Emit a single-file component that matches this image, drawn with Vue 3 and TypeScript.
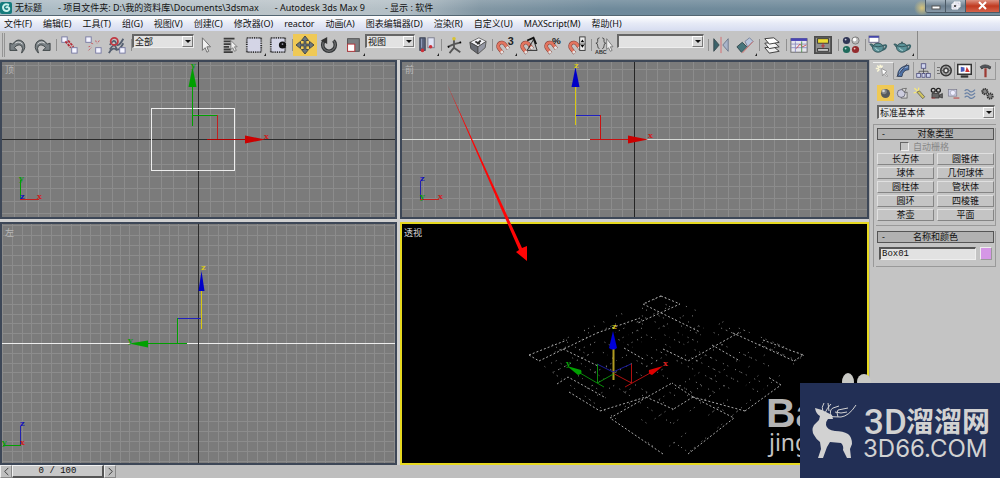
<script setup lang="ts">
import { ref } from 'vue'

interface Tool { kind: 'tool' | 'sep' | 'wide' | 'combo'; id: string; label?: string; width?: string; options?: string[]; active?: boolean; fly?: boolean }

const menus = ['文件(F)', '编辑(E)', '工具(T)', '组(G)', '视图(V)', '创建(C)', '修改器(O)', 'reactor', '动画(A)', '图表编辑器(D)', '渲染(R)', '自定义(U)', 'MAXScript(M)', '帮助(H)']

const t = (id: string, label: string, extra: Partial<Tool> = {}): Tool => ({ kind: 'tool', id, label, ...extra })
const s = (id: string, kind: 'sep' | 'wide' = 'sep'): Tool => ({ kind, id })

const tools: Tool[] = [
  t('undo', '撤销'), t('redo', '重做'), s('s1'),
  t('link', '选择并链接'), t('unlink', '断开链接'), t('bind', '绑定到空间扭曲'), s('s2'),
  { kind: 'combo', id: 'filter', label: '选择过滤器', width: 'w-filter', options: ['全部'] },
  t('pointer', '选择对象'), t('list', '按名称选择'), t('region', '矩形选择区域', { fly: true }), t('crossing', '窗口/交叉'), s('s3'),
  t('move', '选择并移动', { active: true }), t('rotate', '选择并旋转'), t('scale', '选择并缩放', { fly: true }),
  { kind: 'combo', id: 'coord', label: '参考坐标系', width: 'w-coord', options: ['视图'] },
  t('pivot', '使用轴点中心', { fly: true }), s('s4'),
  t('manip', '选择并操纵'), t('keys', '键盘快捷键覆盖切换'), s('s5'),
  t('snap', '捕捉开关', { fly: true }), t('angle', '角度捕捉'), t('percent', '百分比捕捉'), t('spin', '微调器捕捉'), s('s6'),
  t('sets', '编辑命名选择集'),
  { kind: 'combo', id: 'named', label: '命名选择集', width: 'w-named', options: [''] }, s('s7', 'wide'),
  t('mirror', '镜像'), t('align', '对齐', { fly: true }), s('s8'),
  t('layers', '层管理器'), s('s9'),
  t('curve', '曲线编辑器'), t('schem', '图解视图'), s('s10', 'wide'),
  t('mat', '材质编辑器'), s('s11'),
  t('render', '渲染场景'), t('quick', '快速渲染', { fly: true }),
]

const magnet = '<g transform="rotate(-38 7 12)" fill="none"><path d="M3 18v-7a4 4 0 0 1 8 0v7" stroke="#7c3a33" stroke-width="4"/><path d="M3 17v-6a4 4 0 0 1 8 0v6" stroke="#e27560" stroke-width="3"/><path d="M3 18v-3M11 18v-3" stroke="#e4e4e4" stroke-width="3"/></g>'
const teapot = '<path d="M5 14 1 9h2l4 3" fill="#46797f" stroke="#2f5358"/><path d="M15 11q5-2 4 1t-5 4" fill="none" stroke="#3a666c" stroke-width="2"/><ellipse cx="10" cy="13" rx="6" ry="5" fill="#5b9298" stroke="#305055"/><path d="M5 11q5 2 10 0" fill="none" stroke="#2f5358"/><circle cx="10" cy="7" r="1" fill="#2f5358"/><path d="M7 13q1 3 4 3" stroke="#bfe0e2" fill="none"/>'

const icons: Record<string, string> = {
  undo: '<path d="M1 8v8h8l-3-3q4-5 8-2 2 2 0 8 6-6 2-12-6-6-12 2z" fill="#7a8185" stroke="#373d40"/><path d="M7 8q4-3 8 1" stroke="#e4e4e4" fill="none"/>',
  redo: '<path d="M19 8v8h-8l3-3q-4-5-8-2-2 2 0 8Q0 13 4 7q6-6 12 2z" fill="#7a8185" stroke="#373d40"/><path d="M13 8Q9 5 5 9" stroke="#e4e4e4" fill="none"/>',
  link: '<rect x="2" y="1" width="6" height="6" fill="#f4f4ff" stroke="#7376a0"/><rect x="13" y="13" width="6" height="6" fill="#f4f4ff" stroke="#7376a0"/><path d="m6 6 6 7M9 5l6 7" stroke="#b52b36" stroke-width="2" stroke-dasharray="3 1"/>',
  unlink: '<rect x="2" y="1" width="6" height="6" fill="#f4f4ff" stroke="#7376a0"/><rect x="13" y="13" width="6" height="6" fill="#f4f4ff" stroke="#7376a0"/><path d="m8 8 3 1m2-4 1 3m3-3-2 3m-10 4 3-1m-3 5 3-3" stroke="#c64f57" stroke-dasharray="2 1"/>',
  bind: '<path d="M2 10q5-8 7-2t8-5M2 15q5-8 7-2t8-5M1 19q4-8 9-3" fill="none" stroke="#555f70" stroke-width="2"/><circle cx="7" cy="6" r="4" fill="none" stroke="#c13a44" stroke-width="2"/><rect x="13" y="13" width="6" height="6" fill="#f4f4ff" stroke="#7376a0"/>',
  pointer: '<path d="M6 2v14l3-3 2 5 2-1-2-5h4z" fill="#f0f0f0" stroke="#666"/>',
  list: '<path d="M3 3h12M3 6h8M3 9h10M3 12h6M3 15h8M3 18h10" stroke="#3b3b3b" stroke-width="2"/><path d="M11 5v10l2-2 2 4 2-1-2-4h3z" fill="#eee" stroke="#777"/>',
  region: '<rect x="2" y="2" width="16" height="16" fill="#d4d5e6" stroke="#222" stroke-width="2" stroke-dasharray="1 1"/>',
  crossing: '<rect x="2" y="2" width="16" height="16" fill="#d4d5e6" stroke="#222" stroke-width="2" stroke-dasharray="1 1"/><circle cx="15" cy="10" r="4" fill="#111"/><circle cx="15" cy="9" r="1" fill="#99a"/>',
  move: '<path d="m10 0 4 5h-3v4h4V6l5 4-5 4v-3h-4v4h3l-4 5-4-5h3v-4H5v3l-5-4 5-4v3h4V5H6z" fill="#6b767c" stroke="#3c4246"/>',
  rotate: '<path d="M5 5a7 7 0 1 0 10 0" fill="none" stroke="#343739" stroke-width="4"/><path d="M5 5a7 7 0 1 0 10 0" fill="none" stroke="#888" stroke-width="1"/><path d="M1 5 8 1v8z" fill="#333"/>',
  scale: '<rect x="4" y="3" width="13" height="14" fill="#7b7f82" stroke="#4b4b4b"/><rect x="4" y="9" width="8" height="8" fill="#fff" stroke="#b62f34"/>',
  pivot: '<rect x="2" y="2" width="6" height="14" fill="#59627a" stroke="#333a4d"/><rect x="11" y="2" width="7" height="11" fill="#dfe3f4" stroke="#778"/><circle cx="5" cy="16" r="2" fill="#cb3039"/><circle cx="14" cy="12" r="2" fill="#cb3039"/><path d="M4 3v10" stroke="#9ba7c6"/>',
  manip: '<path d="M10 4v9l-5 6m5-6 7 5M3 12l7-3 8-2" fill="none" stroke="#555" stroke-width="2"/><circle cx="10" cy="3" r="2" fill="#d7c331"/><circle cx="4" cy="12" r="1"/><circle cx="17" cy="7" r="1"/>',
  keys: '<path d="m1 7 10-5 8 4-9 6z" fill="#f1f1f5" stroke="#666"/><path d="m1 7 9 5v8l-8-6z" fill="#6a6d75" stroke="#444"/><path d="m19 6-9 6v8l8-7z" fill="#9699a5" stroke="#555"/><path d="m7 6 5 3m-3 0 4-4" stroke="#333" stroke-width="2"/>',
  snap: magnet + '<text x="13" y="10" font-family="Liberation Sans" font-size="12" font-weight="700" fill="#222">3</text>',
  angle: magnet + '<path d="M8 16 15 4l4 12z" fill="none" stroke="#222"/><path d="m8 5 7-3 3 7" stroke="#111" stroke-width="2" fill="none"/>',
  percent: magnet + '<text x="9" y="9" font-family="Liberation Sans" font-size="11" font-weight="700" fill="#222">%</text>',
  spin: magnet + '<rect x="13" y="1" width="6" height="15" fill="#eee" stroke="#333"/><path d="m14 7 2-3 2 3zm0 3 2 3 2-3z"/><path d="M13 9h6" stroke="#333"/>',
  sets: '<path d="M5 2Q2 2 3 6q0 2-2 2 2 0 2 3 0 3 2 3M8 2q3 0 2 4 0 2 2 2-2 0-2 3 0 3-2 3" fill="none" stroke="#444"/><path d="M13 3v12l2-2 2 4 2-1-2-4h3z" fill="#eee" stroke="#777"/><text x="0" y="20" font-family="Liberation Sans" font-size="6" font-weight="700" fill="#333">ABC</text>',
  mirror: '<path d="M2 3v14l6-7z" fill="#39626a" stroke="#3a4a4e"/><path d="M18 3v14l-6-7z" fill="#a9b4c9" stroke="#69758a"/><path d="M10 1v18" stroke="#d66a6e" stroke-width="1"/>',
  align: '<path d="m1 12 6-5 5 5-6 6z" fill="#47757c" stroke="#32474c"/><path d="m10 6 5-4 4 4-6 6z" fill="#b9c6dd" stroke="#75809a"/><path d="m7 19 12-13" stroke="#cd6a66"/>',
  layers: '<path d="m2 13 10-1 6 5-11 2z" fill="#eee" stroke="#333"/><path d="m2 8 10-1 6 5-11 2z" fill="#f5f5f5" stroke="#333"/><path d="m2 3 10-1 6 5-11 2z" fill="#fff" stroke="#333"/>',
  curve: '<rect x="1" y="3" width="18" height="15" fill="#e6e6ee" stroke="#666"/><path d="M1 4h18" stroke="#4944b4" stroke-width="3"/><path d="M6 6v12M1 9h18M1 13h18" stroke="#8c8cc0"/><path d="m7 14 4-5 3 3 4-2" stroke="#ca4a50" fill="none"/><path d="M13 6v12" stroke="#4d9148"/>',
  schem: '<rect x="1" y="1" width="18" height="18" fill="#8f8f8f" stroke="#4c4c4c" stroke-width="2"/><rect x="4" y="3" width="12" height="5" fill="#eedb34" stroke="#333"/><path d="M10 8v6m-2-3h4" stroke="#c02b2f"/><rect x="4" y="14" width="12" height="3" fill="#ccc" stroke="#333"/>',
  mat: '<circle cx="5" cy="5" r="4" fill="#303656"/><circle cx="15" cy="5" r="4" fill="#b7b7b7" stroke="#777"/><circle cx="5" cy="15" r="4" fill="#1f6a5b"/><circle cx="15" cy="15" r="4" fill="#942b2d"/><circle cx="4" cy="4" r="1" fill="#ccd"/><circle cx="14" cy="4" r="2" fill="#fff"/><circle cx="4" cy="14" r="1" fill="#bdd"/><circle cx="14" cy="14" r="1" fill="#ecc"/>',
  render: teapot + '<rect x="0" y="0" width="11" height="7" fill="#fff" stroke="#668"/><path d="M0 1h11" stroke="#4547a9" stroke-width="2"/>',
  quick: teapot,
  create: '<path d="m9 6 1 10 2-3 4 4 1-1-4-4 3-2z" fill="#fff" stroke="#888"/><path d="M7 1v4M1 6h4m-2-4 3 3m4-3L8 5M3 10l3-3" stroke="#fbf7d8" stroke-width="2"/>',
  modify: '<path d="M2 18Q2 4 17 3v6Q9 9 8 18z" fill="#4d70a4" stroke="#26364e"/><path d="M4 16Q5 6 16 5" stroke="#b5cdeb" fill="none"/><path d="M1 18 15 1" stroke="#334" />',
  hier: '<path d="M10 7v3M4 14v-3h12v3M10 10v4" stroke="#444" fill="none"/><rect x="7" y="1" width="6" height="6" fill="#cfd4ee" stroke="#447"/><rect x="1" y="14" width="5" height="5" fill="#cfd4ee" stroke="#447"/><rect x="8" y="14" width="4" height="5" fill="#cfd4ee" stroke="#447"/><rect x="14" y="14" width="5" height="5" fill="#cfd4ee" stroke="#447"/>',
  motion: '<circle cx="12" cy="10" r="7" fill="#aaa" stroke="#333" stroke-width="2"/><circle cx="12" cy="10" r="3" fill="#eee" stroke="#444" stroke-width="2"/><path d="m12 3v4m0 6v4M5 10h4m6 0h4" stroke="#555"/><path d="M0 6h4M0 10h3M0 14h4" stroke="#555"/>',
  display: '<rect x="1" y="2" width="18" height="13" fill="#fff" stroke="#333" stroke-width="2"/><path d="M5 5v7l5-1V6z" fill="#4b5bbb"/><path d="m11 12 2-7 4 7z" fill="#c33"/><path d="M5 18h10" stroke="#333" stroke-width="3"/>',
  util: '<path d="M3 5q6-5 14 0l-1 3-4-2H8L5 8z" fill="#50555c" stroke="#333"/><path d="M10 7v12" stroke="#9c3b34" stroke-width="3"/>',
  geo: '<circle cx="10" cy="10" r="7" fill="#56595d"/><circle cx="8" cy="7" r="4" fill="#85888b"/><circle cx="7" cy="6" r="2" fill="#d5d5d5"/>',
  shape: '<rect x="8" y="8" width="9" height="9" fill="#ddd" stroke="#444"/><circle cx="8" cy="10" r="6" fill="#ccd" stroke="#445"/><path d="m9 3 7-1-3 6z" fill="#ddd" stroke="#444"/>',
  light: '<path d="m2 2 6 5m-7 2 5-1M9 1 8 6" stroke="#f6e87c" stroke-width="2"/><path d="m6 8 4-2 8 9-3 3z" fill="#d1c561" stroke="#444"/>',
  camera: '<circle cx="5" cy="5" r="3" fill="#ccc" stroke="#222" stroke-width="2"/><circle cx="13" cy="5" r="3" fill="#ccc" stroke="#222" stroke-width="2"/><path d="M3 10h11v7H3zm11 3 5-3v7l-5-2" fill="#666" stroke="#222"/><path d="M2 17h6" stroke="#b33"/>',
  helper: '<rect x="2" y="4" width="13" height="10" fill="#c9cce4" stroke="#778"/><circle cx="9" cy="9" r="4" fill="#eef" stroke="#99a"/><path d="M10 17h9" stroke="#bd5e5e" stroke-width="2"/>',
  warp: '<path d="M1 6q4-4 7 0t9-2M1 11q4-4 7 0t9-2M1 16q4-4 7 0t9-2" fill="none" stroke="#6981a5" stroke-width="2"/>',
  system: '<circle cx="6" cy="7" r="4" fill="#888" stroke="#333" stroke-width="3" stroke-dasharray="2 1"/><circle cx="14" cy="14" r="4" fill="#888" stroke="#333" stroke-width="3" stroke-dasharray="2 1"/>',
}

const tabs = [['create', '创建'], ['modify', '修改'], ['hier', '层次'], ['motion', '运动'], ['display', '显示'], ['util', '工具']]
const cats = [['geo', '几何体'], ['shape', '图形'], ['light', '灯光'], ['camera', '摄影机'], ['helper', '辅助对象'], ['warp', '空间扭曲'], ['system', '系统']]
const objectTypes = ['长方体', '圆锥体', '球体', '几何球体', '圆柱体', '管状体', '圆环', '四棱锥', '茶壶', '平面']

const objectName = ref('Box01')
const autoGrid = ref(false)

/* Grid lines run outward from the origin line so they stay evenly spaced. */
function gridPath(ox: number, oy: number, step: number, x0: number, y0: number, x1: number, y1: number): string {
  let d = ''
  for (let i = Math.ceil((x0 - ox) / step); ox + i * step < x1; i++) {
    d += `M${Math.round(ox + i * step) + 0.5} ${y0}V${y1}`
  }
  for (let i = Math.ceil((y0 - oy) / step); oy + i * step < y1; i++) {
    d += `M${x0} ${Math.round(oy + i * step) + 0.5}H${x1}`
  }
  return d
}
const topGrid = gridPath(198, 139, 12.3, 2, 62, 395, 217)
const frontGrid = gridPath(634, 139, 11.7, 402, 62, 867, 217)
const leftGrid = gridPath(198, 343, 9.8, 2, 224, 395, 463)

/* Ground plane of the perspective view: a quad projected from the unit square. */
type P = [number, number]
function project(u: number, v: number): P {
  const [x0, y0, x1, y1, x2, y2, x3, y3] = [661, 296, 804, 355, 676, 463, 529, 355]
  const dx1 = x1 - x2, dx2 = x3 - x2, sx = x0 - x1 + x2 - x3
  const dy1 = y1 - y2, dy2 = y3 - y2, sy = y0 - y1 + y2 - y3
  const den = dx1 * dy2 - dx2 * dy1
  const g = (sx * dy2 - dx2 * sy) / den
  const h = (dx1 * sy - sx * dy1) / den
  const w = g * u + h * v + 1
  return [((x1 - x0 + g * x1) * u + (x3 - x0 + h * x3) * v + x0) / w, ((y1 - y0 + g * y1) * u + (y3 - y0 + h * y3) * v + y0) / w]
}
function groundPath(): string {
  let d = ''
  const n = 14
  let seed = 7
  const rnd = () => (seed = (seed * 16807) % 2147483647) / 2147483647
  for (let i = 0; i <= n; i++) {
    for (let k = 0; k < n * 2; k++) {
      for (const flip of [false, true]) {
        if (rnd() > 0.3) continue
        const a = k / (n * 2), b = (k + 1) / (n * 2), c = i / n
        const p = flip ? project(a, c) : project(c, a)
        const q = flip ? project(b, c) : project(c, b)
        if (Math.max(p[1], q[1]) > 454) continue
        d += `M${p[0].toFixed(1)} ${p[1].toFixed(1)}L${q[0].toFixed(1)} ${q[1].toFixed(1)}`
      }
    }
  }
  return d
}
const ground = groundPath()
const groundMain = 'M661 296 643 304M661 296 680 304 638 323M643 304 700 332M529 355 567 340M539 361 597 333M563 349 598 366M597 333 640 318M624 348 645 360M663 349 688 361 740 332M712 345 740 361M733 333 794 361M763 340 803 355M794 361 803 355M529 355 539 361M610 418 672 383M646 397 675 410M693 397 672 383M693 397 672 410M600 411 646 397M745 411 693 397M745 411 781 385M688 454 734 418 693 397M663 454 610 418M569 392 600 411M557 384 568 377 606 398M781 385 768 377'
</script>

<template>
  <div class="app">
    <header class="titlebar">
      <svg class="app-icon" viewBox="0 0 12 12" aria-hidden="true">
        <rect width="12" height="12" rx="2" fill="#147a7c" />
        <path d="M9 3Q4 1 3 5q0 4 4 4 3-1 2-3-2-2-3 0" fill="none" stroke="#c9f0ec" stroke-width="2" />
      </svg>
      <span>无标题</span>
      <span>- 项目文件夹: D:\我的资料库\Documents\3dsmax</span>
      <span>- Autodesk 3ds Max 9</span>
      <span class="driver">- 显示 : 软件</span>
      <div class="winbtns">
        <button type="button" class="win" aria-label="最小化"><svg viewBox="0 0 20 12"><rect x="6" y="6" width="8" height="3" fill="#fff" stroke="#555" /></svg></button>
        <button type="button" class="win" aria-label="还原"><svg viewBox="0 0 20 12"><path d="M8 2h6v5h-6zM6 4h6v5H6z" fill="#ccd" stroke="#fff" /><rect x="8" y="5" width="2" height="2" fill="#555" /></svg></button>
        <button type="button" class="win close" aria-label="关闭"><svg viewBox="0 0 20 12"><path d="m6 2 7 7M13 2 6 9" stroke="#fff" stroke-width="2" /></svg></button>
      </div>
    </header>

    <nav class="menubar">
      <button v-for="m in menus" :key="m" type="button">{{ m }}</button>
    </nav>

    <div class="toolrow">
      <div class="toolbar">
        <i class="grip"></i>
        <template v-for="tool in tools" :key="tool.id">
          <button v-if="tool.kind === 'tool'" type="button" class="tool" :class="{ active: tool.active, fly: tool.fly }" :aria-label="tool.label">
            <svg viewBox="0 0 20 20" v-html="icons[tool.id]"></svg>
          </button>
          <span v-else-if="tool.kind === 'combo'" class="combo" :class="tool.width">
            <select :aria-label="tool.label"><option v-for="o in tool.options" :key="o">{{ o }}</option></select>
            <i class="drop"></i>
          </span>
          <i v-else class="sep" :class="tool.kind"></i>
        </template>
      </div>
    </div>

    <div class="body">
      <main class="work">
        <div class="views">
          <section class="view">
            <svg viewBox="2 62 393 155" preserveAspectRatio="xMidYMid slice">
              <path class="grid" :d="topGrid" />
              <path d="M2 139.500H395M198.500 62V217" stroke="#2c2c2c" fill="none" />
              <rect x="151.500" y="108.500" width="83" height="62" fill="none" stroke="#eee" />
              <g fill="none">
                <path d="M192.500 86v40M192 115.500h25" stroke="#00a000" />
                <path d="M217.500 115v24" stroke="#c02020" /><path d="M207 139.500h40" stroke="#b00000" />
              </g>
              <path d="m192.500 67 4 20h-8z" fill="#00a000" /><path d="m265 139.500-20-4v8z" fill="#cc0000" />
              <g class="axis"><text x="191" y="68" fill="#0a9d0a">y</text><text x="264" y="139" fill="#c22">x</text>
                <path d="M20.500 180v19" stroke="#00a000" /><path d="M20 199.500h19" stroke="#c02020" />
                <text x="19" y="181" fill="#0a9d0a">y</text><text x="20" y="199" fill="#11b">z</text><text x="37" y="199" fill="#c22">x</text></g>
              <text class="vlabel" x="5" y="73">顶</text>
            </svg>
          </section>
          <section class="view">
            <svg viewBox="402 62 465 155" preserveAspectRatio="xMidYMid slice">
              <path class="grid" :d="frontGrid" />
              <path d="M402 139.500H867" stroke="#d5d8d5" /><path d="M634.500 62V217" stroke="#252525" />
              <g fill="none">
                <path d="M575.500 86v39" stroke="#d8c810" /><path d="M576 115.500h25" stroke="#2020c0" />
                <path d="M600.500 115v24M590 139.500h40" stroke="#c81010" />
              </g>
              <path d="m575.500 67 4 20h-8z" fill="#0000c8" /><path d="m648 139.500-20-4v8z" fill="#cc0000" />
              <g class="axis"><text x="574" y="68" fill="#d8c820">z</text><text x="648" y="138" fill="#c22">x</text>
                <path d="M420.500 181v19" stroke="#2020b0" /><path d="M420 199.500h19" stroke="#c02020" />
                <text x="420" y="181" fill="#11b">z</text><text x="420" y="199" fill="#0a9d0a">y</text><text x="438" y="199" fill="#c22">x</text></g>
              <text class="vlabel" x="405" y="73">前</text>
            </svg>
          </section>
          <section class="view">
            <svg viewBox="2 224 393 239" preserveAspectRatio="xMidYMid slice">
              <path class="grid" :d="leftGrid" />
              <path d="M2 343.500H395" stroke="#eee" /><path d="M198.500 224V463" stroke="#2c2c2c" />
              <g fill="none">
                <path d="M201.500 290v39" stroke="#d8c810" /><path d="M178 318.500h23" stroke="#2020c0" />
                <path d="M177.500 318v25M147 343.500h40" stroke="#00a000" />
              </g>
              <path d="m201.500 271 3 20h-6z" fill="#0000c8" /><path d="m129 343.500 19-3v7z" fill="#00a000" />
              <g class="axis"><text x="201" y="270" fill="#d8c820">z</text><text x="128" y="343" fill="#0a9d0a">y</text>
                <path d="M20.500 426v19" stroke="#2020b0" /><path d="M3 445.500h18" stroke="#00a000" />
                <text x="20" y="426" fill="#11b">z</text><text x="2" y="445" fill="#0a9d0a">y</text><text x="20" y="445" fill="#c22">x</text></g>
              <text class="vlabel" x="5" y="236">左</text>
            </svg>
          </section>
          <section class="view current">
            <svg viewBox="402 224 465 239" preserveAspectRatio="xMidYMid slice">
              <path :d="ground" fill="none" stroke="#8a8a8a" stroke-dasharray="1 4" />
              <path :d="groundMain" fill="none" stroke="#a8a8a8" stroke-dasharray="2 2" />
              <g fill="none">
                <path d="M613.500 347v33" stroke="#b09a20" stroke-width="2" />
                <path d="m597 364 16 8 18-8" stroke="#1c1c9c" />
                <path d="M597.500 364v19l16-9M580 373l24 14" stroke="#0a8a0a" />
                <path d="M631.500 364v19l-17-9M652 372l-27 15" stroke="#b01010" />
              </g>
              <path d="m613 331 4 17q-4 3-8 0z" fill="#0000d8" />
              <path d="m567 366 14 4q2 4-3 5z" fill="#00a000" /><path d="m663 366-14 4q-1 4 3 5z" fill="#dd0000" />
              <g class="axis"><text x="612" y="329" fill="#d8c820">z</text><text x="566" y="366" fill="#0a9d0a">y</text><text x="663" y="366" fill="#d22">x</text></g>
              <text class="brand" x="766" y="427">Ba</text><text class="brand-sub" x="769" y="451">jing</text>
              <text class="vlabel bright" x="404" y="236">透视</text>
            </svg>
          </section>
          <svg class="overlay" viewBox="0 60 869 405" aria-hidden="true">
            <path d="m447 84 75 164 5-2v15l-11-9 3-2z" fill="#ff0505" />
            <g fill="#c9c9c4"><ellipse cx="848" cy="382" rx="6" ry="9" /><ellipse cx="864" cy="382" rx="7" ry="8" /></g>
          </svg>
        </div>
        <footer class="timebar">
          <button type="button" class="step" aria-label="上一帧"><svg viewBox="0 0 10 10"><path d="M7 1 3 5l4 4" /></svg></button>
          <button type="button" class="frame">0 / 100</button>
          <button type="button" class="step" aria-label="下一帧"><svg viewBox="0 0 10 10"><path d="m3 1 4 4-4 4" /></svg></button>
        </footer>
      </main>

      <aside class="panel">
        <div class="tabs">
          <button v-for="(tab, i) in tabs" :key="tab[0]" type="button" :class="{ on: i === 0 }" :aria-label="tab[1]"><svg viewBox="0 0 20 20" v-html="icons[tab[0]]"></svg></button>
        </div>
        <div class="cats">
          <button v-for="(cat, i) in cats" :key="cat[0]" type="button" :class="{ on: i === 0 }" :aria-label="cat[1]"><svg viewBox="0 0 20 20" v-html="icons[cat[0]]"></svg></button>
        </div>
        <span class="combo kind">
          <select aria-label="对象类别"><option>标准基本体</option></select>
          <i class="drop"></i>
        </span>
        <div class="rollouts">
          <section class="rollout">
            <button type="button" class="rhead"><span>-</span>对象类型</button>
            <label class="auto"><input v-model="autoGrid" type="checkbox" disabled />自动栅格</label>
            <div class="types">
              <button v-for="o in objectTypes" :key="o" type="button">{{ o }}</button>
            </div>
          </section>
          <section class="rollout">
            <button type="button" class="rhead"><span>-</span>名称和颜色</button>
            <div class="namerow">
              <input v-model="objectName" type="text" aria-label="名称" />
              <button type="button" class="swatch" aria-label="对象颜色"></button>
            </div>
          </section>
        </div>
      </aside>
    </div>

    <div class="sitemark">
      <svg viewBox="0 0 200 95" role="img" aria-label="3D溜溜网 3D66.COM">
        <path d="M15 25q1 6 5 8l-1 4-5 5q-3 5 0 10 2 4 6 7l1 7-3 9h5l4-11 3-5 11 1q3 3 2 7l4 8h4l-1-9 2-5q0-7-4-10-5-3-13-3-8-1-9-6 0-4 2-6h5l-1-4-6-3-4-2z" fill="#d2d2d2" />
        <path d="M23 29q-2-5 1-9M25 30q2-5 6-9M29 28l-1-8M25 31q8 4 16 3t15-12M31 33q-2-6 2-8l6-2M38 34q-2-5 0-7l10-2M35 29q6 2 12 0" fill="none" stroke="#d2d2d2" />
        <text class="mark-lat" x="64" y="51">3D</text><text class="mark-cjk" x="106" y="49">溜溜网</text>
        <text class="mark-url" x="63" y="74">3D66.COM</text>
      </svg>
    </div>
  </div>
</template>

<style>
html, body { margin: 0; height: 100%; background: #c4c4c4; }
</style>

<style scoped>
.app { position: relative; display: flex; flex-direction: column; height: 100vh; overflow: hidden; background: #c4c4c4; color: #111; font: 9px/12px "Noto Sans", "Noto Sans CJK SC", sans-serif; }
.app *, .app *::before, .app *::after { box-sizing: border-box; }
button, select, input { margin: 0; padding: 0; border: 0; border-radius: 0; background: none; color: inherit; font: inherit; }
svg { display: block; }

.titlebar { display: flex; flex: none; align-items: center; gap: 16px; height: 16px; border-bottom: 1px solid #536672; white-space: pre;
  background: radial-gradient(circle at 922px 8px, #d8c47a 0, transparent 8px), linear-gradient(180deg, rgba(255,255,255,.15), transparent 60%), linear-gradient(90deg, #a9bac4, #bcc5c9 30%, #b3bfc6 40%, #8297a4 48%, #6f8a9b 60%, #718b9b); }
.app-icon { width: 12px; height: 12px; margin-right: -13px; }
.driver { padding-left: 4px; }
.winbtns { display: flex; align-self: flex-start; margin-left: auto; height: 13px; border: 1px solid #4b5a66; border-top: 0; border-radius: 0 0 0 3px; overflow: hidden; }
.win { width: 20px; border-right: 1px solid #4b5a66; background: linear-gradient(#a9b7c2, #6c7f8f 50%, #8799a8); }
.win svg { width: 20px; height: 12px; }
.win.close { display: flex; justify-content: center; width: 33px; border: 0; background: linear-gradient(#dd9382, #c03a20 50%, #d4634b); }

.menubar { display: flex; flex: none; align-items: center; gap: 11px; height: 15px; padding-left: 4px; background: linear-gradient(#fff, #e6eaf6 50%, #d6dcf0); white-space: nowrap; }

.toolrow { flex: none; height: 29px; border-bottom: 1px solid #999; }
.toolbar { display: flex; align-items: center; width: 918px; height: 28px; border-right: 1px solid #888; }
.grip { flex: none; width: 3px; height: 24px; margin: 0 1px 0 2px; border: solid #949494; border-width: 0 1px; }
.tool { position: relative; flex: none; width: 24px; height: 22px; }
.tool svg { width: 18px; height: 18px; margin: 0 auto; overflow: visible; }
.tool.active { background: #efc956; }
.tool.fly::after { content: ""; position: absolute; right: 0; bottom: 0; border: solid transparent; border-width: 3px 0 0 3px; border-right: 2px solid #222; }
.sep { flex: none; width: 3px; height: 12px; border: solid #8f8f8f; border-width: 0 1px 0 0; }
.sep.wide { width: 4px; }
.combo { position: relative; display: block; flex: none; height: 14px; }
.toolbar .combo { align-self: flex-start; margin-top: 3px; }
.combo select { display: block; width: 100%; height: 100%; padding: 0 14px 0 1px; border: solid #666; border-width: 2px 1px 1px 2px; border-right-color: #eee; border-bottom-color: #eee; background: #e2e2e2; appearance: none; line-height: 10px; }
.drop { position: absolute; top: 2px; right: 1px; width: 11px; height: 11px; border: solid; border-width: 1px; border-color: #fff #777 #777 #fff; background: #d8d8d8; pointer-events: none; }
.drop::after { content: ""; position: absolute; left: 2px; top: 3px; border: solid transparent; border-width: 3px 3px 0; border-top-color: #111; }
.w-filter { width: 62px; }
.w-coord { width: 50px; }
.w-named { width: 87px; margin-left: 1px; margin-right: 1px; }

.body { display: flex; flex: 1; min-height: 0; }
.work { display: flex; flex: 1; flex-direction: column; min-width: 0; }
.views { position: relative; display: grid; flex: 1; grid-template-columns: 397fr 469fr; grid-template-rows: 159fr 243fr; gap: 3px; min-height: 0; background: #cfcfcf; }
.view { min-width: 0; min-height: 0; border: 2px solid #3d4757; background: #7b7b7b; overflow: hidden; }
.view.current { border-color: #e6d820; background: #000; }
.view svg { width: 100%; height: 100%; }
.grid { fill: none; stroke: #8c8c8c; }
.axis text { font: bold 8px "DejaVu Serif", serif; }
.vlabel { fill: #b8b8b8; font: 9px "Noto Sans CJK SC", sans-serif; }
.vlabel.bright { fill: #d8d8d8; }
.brand { fill: #b5b5b5; font: bold 41px "Liberation Sans", sans-serif; }
.brand-sub { fill: #c4c4c4; font: 23px "Noto Sans", sans-serif; }
.overlay { position: absolute; inset: 0; width: 100%; height: 100%; overflow: visible; pointer-events: none; z-index: 1; }

.timebar { display: flex; flex: none; height: 13px; background: #bebebe; }
.step { width: 12px; border: solid; border-width: 1px; border-color: #eee #888 #888 #eee; }
.step svg { width: 9px; height: 9px; margin: 0 auto; fill: none; stroke: #333; }
.frame { width: 92px; border: solid; border-width: 1px 2px 2px 1px; border-color: #f2f2f2 #555 #555 #f2f2f2; background: #c8c8c8; font: 9px/9px "Liberation Mono", monospace; }

.panel { flex: none; width: 131px; padding: 2px 4px 0 3px; border-left: 1px solid #aaa; }
.tabs { display: flex; height: 18px; }
.tabs button { flex: 1; border: solid #999; border-width: 0 1px 1px 0; }
.tabs button.on { border-bottom-color: transparent; border-top: 1px solid #eee; }
.tabs svg { width: 15px; height: 15px; margin: 0 auto; }
.cats { display: flex; height: 16px; margin-top: 5px; padding-left: 4px; }
.cats button { flex: 1; }
.cats button.on { background: #efc956; }
.cats svg { width: 13px; height: 13px; margin: 0 auto; }
.kind { width: 118px; margin: 4px 0 0 4px; }
.rollouts { margin-top: 5px; padding: 3px 0 0 2px; border: solid #999; border-width: 1px 0 0 1px; }
.rollout { margin-bottom: 5px; padding: 0 1px 4px; border: solid #999; border-width: 0 1px 1px 0; }
.rhead { position: relative; display: block; width: 100%; height: 12px; border: 1px solid #555; background: #b1b1b1; line-height: 10px; text-align: center; }
.rhead span { position: absolute; left: 4px; }
.auto { display: flex; align-items: center; gap: 4px; height: 13px; padding-left: 23px; color: #888; }
.auto input { width: 9px; height: 9px; border: 1px solid; border-color: #666 #eee #eee #666; appearance: none; }
.types { display: grid; grid-template-columns: 1fr 1fr; gap: 2px 3px; }
.types button { height: 12px; border: solid; border-width: 1px; border-color: #e0e0e0 #858585 #858585 #e0e0e0; line-height: 10px; }
.namerow { display: flex; align-items: center; gap: 4px; padding: 4px 2px 2px; }
.namerow input { flex: 1; min-width: 0; height: 13px; padding-left: 1px; border: solid; border-width: 2px 1px 1px 2px; border-color: #555 #eee #eee #555; background: #e2e2e2; font: 9px/9px "Liberation Mono", monospace; }
.swatch { width: 12px; height: 13px; border: solid; border-width: 1px; border-color: #eee #999 #999 #eee; background: #d597e6; }

.sitemark { position: absolute; right: 0; bottom: 0; z-index: 2; width: 200px; height: 95px; background: #222f55; }
.mark-lat { fill: #d2d2d2; font: 500 35px Roboto, sans-serif; }
.mark-cjk { fill: #d2d2d2; font: bold 28px "Noto Sans CJK SC", sans-serif; }
.mark-url { fill: #d2d2d2; font: 24px Inter, sans-serif; }
</style>
